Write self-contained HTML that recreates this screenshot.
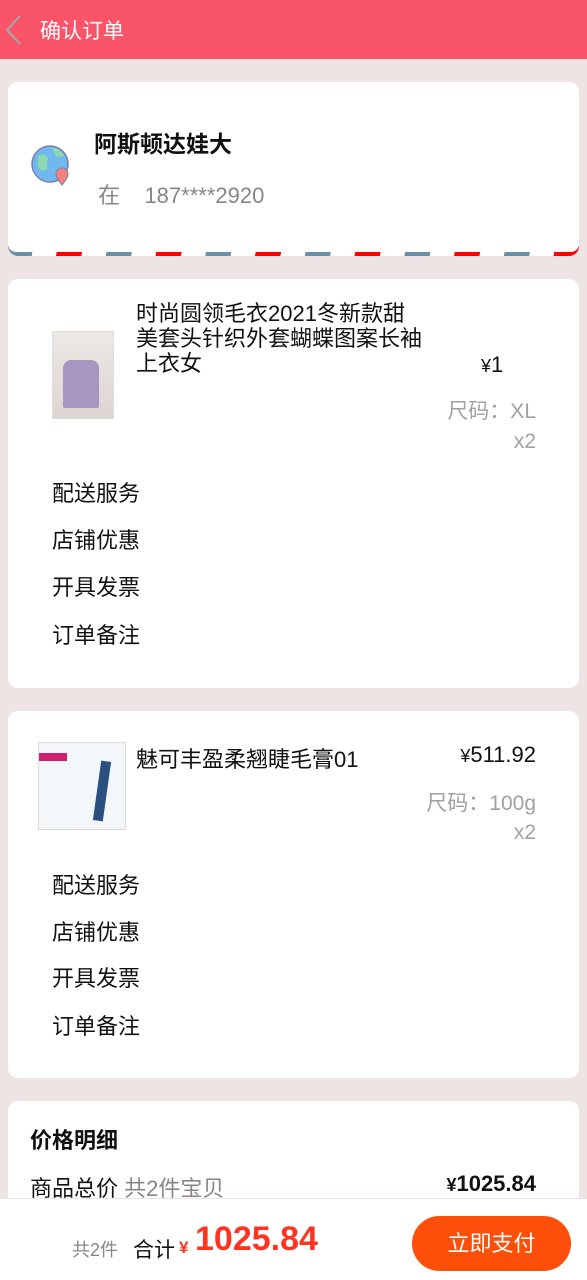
<!DOCTYPE html>
<html><head><meta charset="utf-8"><style>
*{margin:0;padding:0;box-sizing:border-box}
body{width:587px;height:1280px;background:#ede4e3;font-family:"Liberation Sans","Noto Sans CJK SC",sans-serif;position:relative;overflow:hidden;color:#111}
.a{position:absolute;white-space:nowrap}
.card{position:absolute;left:8px;width:571px;background:#fff;border-radius:10px}
.m{position:absolute;left:52px;font-size:22px}
.g{color:#a59f9f}
</style></head><body>
<div class="a" style="left:0;top:0;width:587px;height:59px;background:#fa5469"></div>
<svg class="a" style="left:4px;top:14px" width="20" height="32"><path d="M16 2 L3 16 L16 30" fill="none" stroke="#a8a8a8" stroke-width="2"/></svg>
<div class="a" style="left:40px;top:15px;color:#fff;font-size:21px">确认订单</div>

<div class="card" style="top:82px;height:174px;overflow:hidden;border-radius:10px">
<div class="a" style="left:0;top:164px;width:571px;height:10px;background:repeating-linear-gradient(100deg,#6890aa 0 25px,transparent 25px 49px,#f00 49px 74px,transparent 74px 98px)"></div>
<div class="a" style="left:0;top:0;width:571px;height:170px;background:#fff;border-radius:0 0 8px 8px"></div>
</div>
<svg class="a" style="left:30px;top:142px" width="42" height="46"><circle cx="20" cy="22" r="18" fill="#6fb8f0" stroke="#7a7fa8" stroke-width="1.5"/><path d="M8 14 q6-4 10 2 q-2 6 0 10 q-6 6-10-2z" fill="#8fd8b0"/><path d="M22 6 q8 0 12 8 q-4 2-8 0z" fill="#8fd8b0"/><path d="M38 32 a6 6 0 1 0 -12 0 q0 4 6 11 q6-7 6-11z" fill="#f48080" stroke="#7a7fa8"/></svg>
<div class="a" style="left:94px;top:125px;font-size:23px;font-weight:bold">阿斯顿达娃大</div>
<div class="a" style="left:98px;top:178px;font-size:22px;color:#8a8585">在&nbsp;&nbsp;&nbsp;&nbsp;187****2920</div>

<div class="card" style="top:279px;height:409px"></div>
<div class="a" style="left:52px;top:331px;width:62px;height:88px;background:linear-gradient(#ece8e4,#ddd5d2);border:1px solid #ddd"><div class="a" style="left:10px;top:28px;width:36px;height:48px;background:#a796c0;border-radius:8px 8px 2px 2px"></div></div>
<div class="a" style="left:136px;top:301px;font-size:22px;line-height:25px;white-space:normal;width:300px">时尚圆领毛衣2021冬新款甜<br>美套头针织外套蝴蝶图案长袖<br>上衣女</div>
<div class="a" style="left:481px;top:352px;font-size:22px"><span style="font-size:18px">¥</span>1</div>
<div class="a g" style="right:51px;top:395px;font-size:21px">尺码：XL</div>
<div class="a g" style="right:51px;top:430px;font-size:21px">x2</div>
<div class="m" style="top:476px">配送服务</div>
<div class="m" style="top:523px">店铺优惠</div>
<div class="m" style="top:570px">开具发票</div>
<div class="m" style="top:618px">订单备注</div>

<div class="card" style="top:711px;height:367px"></div>
<div class="a" style="left:38px;top:742px;width:88px;height:88px;background:#f4f7f9;border:1px solid #ddd"><div class="a" style="left:0;top:10px;width:28px;height:8px;background:#d02070"></div><div class="a" style="left:58px;top:18px;width:10px;height:60px;background:#2a5080;transform:rotate(8deg)"></div></div>
<div class="a" style="left:136px;top:742px;font-size:22px">魅可丰盈柔翘睫毛膏01</div>
<div class="a" style="right:51px;top:742px;font-size:22px"><span style="font-size:18px">¥</span>511.92</div>
<div class="a g" style="right:51px;top:787px;font-size:21px">尺码：100g</div>
<div class="a g" style="right:51px;top:821px;font-size:21px">x2</div>
<div class="m" style="top:868px">配送服务</div>
<div class="m" style="top:915px">店铺优惠</div>
<div class="m" style="top:961px">开具发票</div>
<div class="m" style="top:1009px">订单备注</div>

<div class="card" style="top:1101px;height:179px"></div>
<div class="a" style="left:30px;top:1123px;font-size:22px;font-weight:bold">价格明细</div>
<div class="a" style="left:30px;top:1171px;font-size:22px">商品总价 <span style="color:#8a8585">共2件宝贝</span></div>
<div class="a" style="right:51px;top:1171px;font-size:22px;font-weight:bold"><span style="font-size:18px">¥</span>1025.84</div>

<div class="a" style="left:0;top:1198px;width:587px;height:82px;background:#fff;border-top:1px solid #f0e0e0"></div>
<div class="a" style="left:72px;top:1236px;font-size:18px;color:#8a8585">共2件</div>
<div class="a" style="left:133px;top:1234px;font-size:21px">合计</div>
<div class="a" style="left:179px;top:1238px;font-size:17px;color:#f32;font-weight:bold">¥</div>
<div class="a" style="left:195px;top:1220px;font-size:34px;color:#f32;font-weight:bold">1025.84</div>
<div class="a" style="left:412px;top:1216px;width:159px;height:55px;border-radius:28px;background:#fe4f0a;color:#fff;font-size:22px;text-align:center;line-height:55px">立即支付</div>
</body></html>
